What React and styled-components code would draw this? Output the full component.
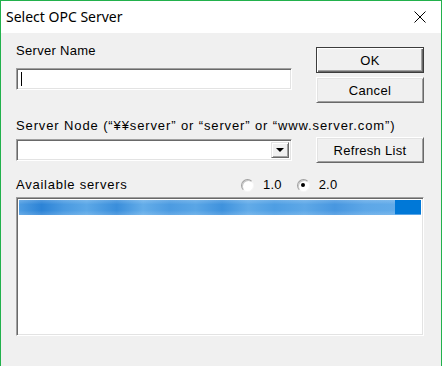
import React from "react";
import styled, { createGlobalStyle, css } from "styled-components";

const Global = createGlobalStyle`
  html, body { margin: 0; padding: 0; background: #ffffff; }
  * { box-sizing: border-box; }
`;

const Window = styled.div`
  width: 442px;
  height: 366px;
  display: flex;
  flex-direction: column;
  border: 1px solid #22b14c;
  border-bottom: none;
  background: #f0f0f0;
  font-family: "Liberation Sans", Arial, sans-serif;
  font-size: 13px;
  color: #000;
`;

const TitleBar = styled.div`
  height: 32px;
  flex: none;
  background: #ffffff;
  display: flex;
  align-items: center;
  justify-content: space-between;
  padding: 0 15px 0 5px;
`;

const Title = styled.span`
  font-family: "Noto Sans", "Segoe UI", sans-serif;
  font-size: 14px;
  line-height: 18px;
  color: #000;
`;

const Body = styled.div`
  flex: 1;
  padding: 0 17px 0 15px;
  display: flex;
  flex-direction: column;
`;

const Columns = styled.div`
  display: grid;
  grid-template-columns: 276px 108px;
  column-gap: 24px;
  align-items: ${(p) => (p.$center ? "center" : "start")};
  margin-top: ${(p) => p.$top || 0}px;
`;

const Field = styled.div`
  padding-top: 10px;
  display: flex;
  flex-direction: column;
  gap: 9px;
`;

const Label = styled.div`
  line-height: 16px;
  height: 16px;
  white-space: nowrap;
  letter-spacing: ${(p) => p.$spacing ?? 0.3}px;
  margin-top: ${(p) => p.$top || 0}px;
`;

const sunken = css`
  background: #ffffff;
  border: 1px solid;
  border-color: #a0a0a0 #ffffff #ffffff #a0a0a0;
  box-shadow: inset 1px 1px 0 #696969, inset -1px -1px 0 #e3e3e3;
`;

const TextBox = styled.div`
  ${sunken};
  height: 22px;
  display: flex;
  align-items: center;
  padding-left: 4px;
`;

const Caret = styled.span`
  width: 1px;
  height: 14px;
  background: #000;
`;

const ButtonStack = styled.div`
  padding-top: 14px;
  display: flex;
  flex-direction: column;
  gap: 4px;
`;

const Button = styled.button`
  height: 26px;
  width: 108px;
  padding: 0;
  font-family: "Liberation Sans", Arial, sans-serif;
  font-size: 13px;
  letter-spacing: 0.3px;
  color: #000;
  background: #f0f0f0;
  border: 1px solid;
  border-color: ${(p) =>
    p.$default ? "#3c3c3c" : "#ffffff #696969 #696969 #ffffff"};
  box-shadow: ${(p) =>
    p.$default
      ? "inset 1px 1px 0 #ffffff, inset -1px -1px 0 #696969, inset -2px -2px 0 #a0a0a0"
      : "inset 1px 1px 0 #e3e3e3, inset -1px -1px 0 #a0a0a0"};
`;

const Combo = styled.div`
  ${sunken};
  height: 22px;
  display: flex;
  justify-content: flex-end;
  align-items: stretch;
  padding: 2px;
`;

const DropButton = styled.div`
  width: 18px;
  background: #f0f0f0;
  border: 1px solid;
  border-color: #e3e3e3 #696969 #696969 #e3e3e3;
  box-shadow: inset 1px 1px 0 #ffffff, inset -1px -1px 0 #a0a0a0;
  display: flex;
  align-items: center;
  justify-content: center;
`;

const Arrow = styled.span`
  width: 0;
  height: 0;
  border-left: 4px solid transparent;
  border-right: 4px solid transparent;
  border-top: 4px solid #000;
`;

const ListHeader = styled.div`
  margin-top: 14px;
  height: 16px;
  display: flex;
  align-items: center;
`;

const HeaderLabel = styled(Label)`
  width: 225px;
`;

const RadioGroup = styled.div`
  display: flex;
  align-items: center;
  gap: 15px;
`;

const RadioItem = styled.label`
  display: flex;
  align-items: center;
  gap: 9px;
  line-height: 16px;
  letter-spacing: 0.2px;
`;

const RadioCircle = styled.span`
  width: 13px;
  height: 13px;
  border-radius: 50%;
  background: #ffffff;
  border: 1px solid;
  border-color: #a0a0a0 #f6f6f6 #f6f6f6 #a0a0a0;
  box-shadow: inset 1px 1px 0 #c8c8c8;
  display: flex;
  align-items: center;
  justify-content: center;
  &::after {
    content: "";
    width: 4px;
    height: 4px;
    border-radius: 50%;
    background: ${(p) => (p.$checked ? "#000" : "transparent")};
  }
`;

const ListBox = styled.div`
  ${sunken};
  margin-top: 4px;
  height: 139px;
  padding: 2px;
`;

const SelectedRow = styled.div`
  height: 15px;
  display: flex;
`;

const RowBlur = styled.div`
  flex: 1;
  background:
    linear-gradient(to bottom, rgba(255,255,255,0.18), rgba(255,255,255,0) 30%, rgba(255,255,255,0) 70%, rgba(255,255,255,0.15)),
    linear-gradient(to right, #4f9de2 0%, #2c83d6 6%, #4a9ae1 12%, #5ca8e7 18%, #3a8edb 26%, #64ade9 33%, #4c9be1 40%, #5aa6e6 47%, #3f92dd 54%, #62abe8 61%, #4e9ee3 68%, #5ea8e7 76%, #4897e0 84%, #5da7e7 92%, #62abe9 100%);
`;

const RowSolid = styled.div`
  width: 26px;
  background: #0078d7;
  border-bottom: 1px solid #5aa5e6;
`;

function CloseIcon() {
  return (
    <svg width="12" height="12" viewBox="0 0 12 12">
      <path d="M0.5 0.5 L11.5 11.5 M11.5 0.5 L0.5 11.5" stroke="#000" strokeWidth="1" fill="none" />
    </svg>
  );
}

export default function App() {
  return (
    <>
      <Global />
      <Window>
        <TitleBar>
          <Title>Select OPC Server</Title>
          <CloseIcon />
        </TitleBar>
        <Body>
          <Columns>
            <Field>
              <Label>Server Name</Label>
              <TextBox>
                <Caret />
              </TextBox>
            </Field>
            <ButtonStack>
              <Button $default>OK</Button>
              <Button>Cancel</Button>
            </ButtonStack>
          </Columns>
          <Label $top={15} $spacing={0.88}>
            Server Node (“¥¥server” or “server” or “www.server.com”)
          </Label>
          <Columns $center $top={3}>
            <Combo>
              <DropButton>
                <Arrow />
              </DropButton>
            </Combo>
            <Button>Refresh List</Button>
          </Columns>
          <ListHeader>
            <HeaderLabel $spacing={0.75}>Available servers</HeaderLabel>
            <RadioGroup>
              <RadioItem>
                <RadioCircle />
                1.0
              </RadioItem>
              <RadioItem>
                <RadioCircle $checked />
                2.0
              </RadioItem>
            </RadioGroup>
          </ListHeader>
          <ListBox>
            <SelectedRow>
              <RowBlur />
              <RowSolid />
            </SelectedRow>
          </ListBox>
        </Body>
      </Window>
    </>
  );
}
